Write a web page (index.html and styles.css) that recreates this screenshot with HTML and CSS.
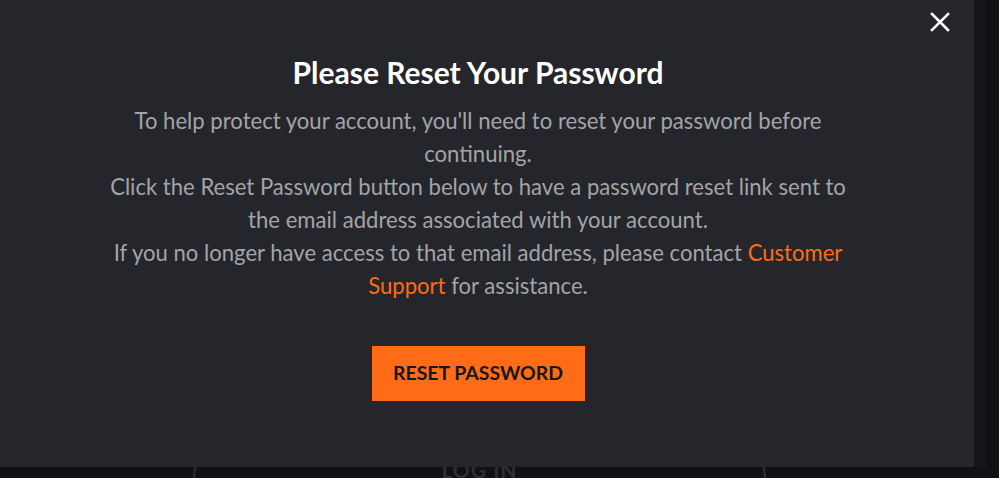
FILE: index.html
```html
<!DOCTYPE html>
<html>
<head>
<meta charset="utf-8">
<link rel="stylesheet" href="styles.css">
</head>
<body>
<div class="page">
  <div class="behind">
    <div class="login-btn">LOG IN</div>
  </div>
  <div class="scrollstrip"></div>
  <div class="modal">
    <button class="close" aria-label="Close">
      <svg width="20" height="20" viewBox="0 0 20 20"><path d="M2 2 L18 18 M18 2 L2 18" stroke="#ffffff" stroke-width="2.6" stroke-linecap="square"/></svg>
    </button>
    <div class="content">
      <h1 class="title">Please Reset Your Password</h1>
      <p class="text">To help protect your account, you'll need to reset your password before continuing.</p>
      <p class="text">Click the Reset Password button below to have a password reset link sent to the email address associated with your account.</p>
      <p class="text">If you no longer have access to that email address, please contact <a class="link" href="#">Customer Support</a> for assistance.</p>
      <button class="reset">RESET PASSWORD</button>
    </div>
  </div>
</div>
</body>
</html>
```
FILE: styles.css
```css
* { box-sizing: border-box; }
html, body { margin: 0; padding: 0; }
body {
  width: 999px;
  height: 478px;
  overflow: hidden;
  background: #101114;
  font-family: Lato, "Open Sans", sans-serif;
}
.page {
  position: relative;
  width: 999px;
  height: 478px;
  overflow: hidden;
}
.behind {
  position: absolute;
  left: 0;
  top: 0;
  width: 999px;
  height: 478px;
  overflow: hidden;
}
.login-btn {
  position: absolute;
  left: 193px;
  top: 420px;
  width: 573px;
  height: 120px;
  border: 2px solid #2f3034;
  border-radius: 60px;
  color: #2e2f33;
  font-weight: 700;
  font-size: 21px;
  letter-spacing: 1px;
  text-align: center;
  padding-top: 35px;
}
.scrollstrip {
  position: absolute;
  left: 974px;
  top: 0;
  width: 13px;
  height: 467px;
  background: #141518;
}
.modal {
  position: absolute;
  left: 0;
  top: 0;
  width: 974px;
  height: 467px;
  background: #25262b;
}
.close {
  position: absolute;
  left: 930px;
  top: 12px;
  width: 20px;
  height: 20px;
  padding: 0;
  border: 0;
  background: none;
  cursor: pointer;
}
.close svg { display: block; }
.content {
  width: 756px;
  margin-left: 100px;
  padding-top: 52px;
  display: flex;
  flex-direction: column;
  align-items: center;
  text-align: center;
}
.title {
  margin: 0 0 12px;
  color: #ffffff;
  font-size: 30px;
  font-weight: 700;
  line-height: 40px;
}
.text {
  margin: 0;
  color: #a3a4a8;
  font-size: 22.1px;
  line-height: 33px;
}
.link {
  color: #ff6b17;
  text-decoration: none;
}
.reset {
  margin-top: 44px;
  width: 213px;
  height: 55px;
  border: 0;
  background: #ff6b17;
  color: #16171a;
  font-family: Lato, "Open Sans", sans-serif;
  font-weight: 700;
  font-size: 19.4px;
  padding: 0 0 3px;
}
```
